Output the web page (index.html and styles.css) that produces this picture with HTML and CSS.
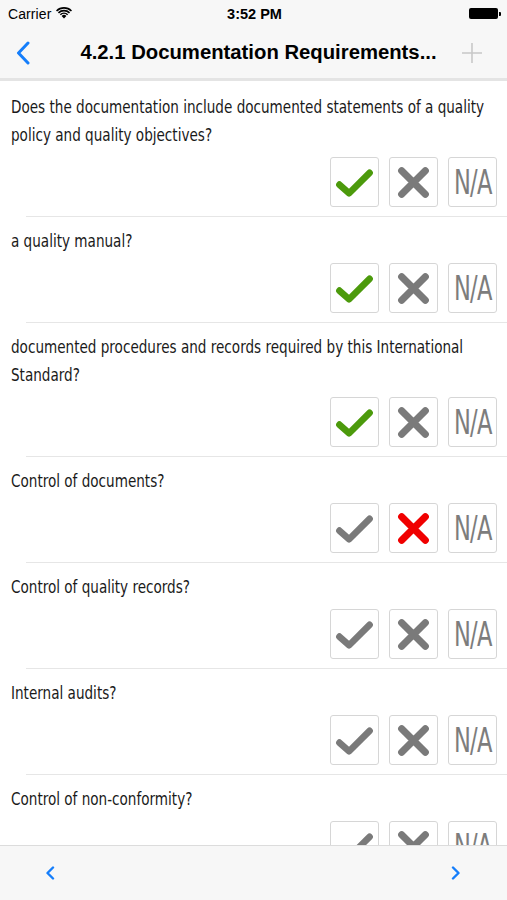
FILE: index.html
```html
<!DOCTYPE html>
<html>
<head>
<meta charset="utf-8">
<link rel="stylesheet" href="styles.css">
</head>
<body>
<div class="screen">
  <div class="statusbar">
    <div class="carrier">Carrier
      <svg class="wifi" width="16" height="12" viewBox="0 0 16 12"><path d="M8 11.5 L5.6 9 A3.4 3.4 0 0 1 10.4 9 Z" fill="#000"/><path d="M3.8 7.2 A6 6 0 0 1 12.2 7.2 L11.1 8.3 A4.5 4.5 0 0 0 4.9 8.3 Z" fill="#000"/><path d="M1.9 5.3 A8.7 8.7 0 0 1 14.1 5.3 L13 6.4 A7.2 7.2 0 0 0 3 6.4 Z" fill="#000"/><path d="M0 3.4 A11.3 11.3 0 0 1 16 3.4 L14.9 4.5 A9.8 9.8 0 0 0 1.1 4.5 Z" fill="#000"/></svg>
    </div>
    <div class="time">3:52 PM</div>
    <div class="battery"><span class="batt-body"></span><span class="batt-tip"></span></div>
  </div>
  <div class="navbar">
    <svg class="nav-back" width="14" height="24" viewBox="0 0 14 24"><path d="M12 2 L2.5 12 L12 22" fill="none" stroke="#157efb" stroke-width="3" stroke-linecap="round" stroke-linejoin="round"/></svg>
    <div class="nav-title">4.2.1 Documentation Requirements...</div>
    <svg class="nav-plus" width="22" height="22" viewBox="0 0 22 22"><path d="M11 1 V21 M1 11 H21" stroke="#c8c8c8" stroke-width="1.6"/></svg>
  </div>
  <div class="list">
    <div class="row">
      <div class="q"><span class="qt">Does the documentation include documented statements of a quality policy and quality objectives?</span></div>
      <div class="btns">
        <div class="btn"><svg class="ico" viewBox="0 0 40 40"><path d="M6 22 L15 30 L34 11" class="chk green"/></svg></div>
        <div class="btn"><svg class="ico" viewBox="0 0 40 40"><path d="M9 9 L31 31 M31 9 L9 31" class="crs gray"/></svg></div>
        <div class="btn"><span class="na">N/A</span></div>
      </div>
    </div>
    <div class="row">
      <div class="q"><span class="qt">a quality manual?</span></div>
      <div class="btns">
        <div class="btn"><svg class="ico" viewBox="0 0 40 40"><path d="M6 22 L15 30 L34 11" class="chk green"/></svg></div>
        <div class="btn"><svg class="ico" viewBox="0 0 40 40"><path d="M9 9 L31 31 M31 9 L9 31" class="crs gray"/></svg></div>
        <div class="btn"><span class="na">N/A</span></div>
      </div>
    </div>
    <div class="row">
      <div class="q"><span class="qt">documented procedures and records required by this International Standard?</span></div>
      <div class="btns">
        <div class="btn"><svg class="ico" viewBox="0 0 40 40"><path d="M6 22 L15 30 L34 11" class="chk green"/></svg></div>
        <div class="btn"><svg class="ico" viewBox="0 0 40 40"><path d="M9 9 L31 31 M31 9 L9 31" class="crs gray"/></svg></div>
        <div class="btn"><span class="na">N/A</span></div>
      </div>
    </div>
    <div class="row">
      <div class="q"><span class="qt">Control of documents?</span></div>
      <div class="btns">
        <div class="btn"><svg class="ico" viewBox="0 0 40 40"><path d="M6 22 L15 30 L34 11" class="chk gray"/></svg></div>
        <div class="btn"><svg class="ico" viewBox="0 0 40 40"><path d="M9 9 L31 31 M31 9 L9 31" class="crs red"/></svg></div>
        <div class="btn"><span class="na">N/A</span></div>
      </div>
    </div>
    <div class="row">
      <div class="q"><span class="qt">Control of quality records?</span></div>
      <div class="btns">
        <div class="btn"><svg class="ico" viewBox="0 0 40 40"><path d="M6 22 L15 30 L34 11" class="chk gray"/></svg></div>
        <div class="btn"><svg class="ico" viewBox="0 0 40 40"><path d="M9 9 L31 31 M31 9 L9 31" class="crs gray"/></svg></div>
        <div class="btn"><span class="na">N/A</span></div>
      </div>
    </div>
    <div class="row">
      <div class="q"><span class="qt">Internal audits?</span></div>
      <div class="btns">
        <div class="btn"><svg class="ico" viewBox="0 0 40 40"><path d="M6 22 L15 30 L34 11" class="chk gray"/></svg></div>
        <div class="btn"><svg class="ico" viewBox="0 0 40 40"><path d="M9 9 L31 31 M31 9 L9 31" class="crs gray"/></svg></div>
        <div class="btn"><span class="na">N/A</span></div>
      </div>
    </div>
    <div class="row">
      <div class="q"><span class="qt">Control of non-conformity?</span></div>
      <div class="btns">
        <div class="btn"><svg class="ico" viewBox="0 0 40 40"><path d="M6 22 L15 30 L34 11" class="chk gray"/></svg></div>
        <div class="btn"><svg class="ico" viewBox="0 0 40 40"><path d="M9 9 L31 31 M31 9 L9 31" class="crs gray"/></svg></div>
        <div class="btn"><span class="na">N/A</span></div>
      </div>
    </div>
  </div>
  <div class="toolbar">
    <svg class="tb-ico" width="10" height="14" viewBox="0 0 10 14"><path d="M8 1.5 L2.5 7 L8 12.5" fill="none" stroke="#157efb" stroke-width="2.4" stroke-linecap="round" stroke-linejoin="round"/></svg>
    <svg class="tb-ico" width="10" height="14" viewBox="0 0 10 14"><path d="M2 1.5 L7.5 7 L2 12.5" fill="none" stroke="#157efb" stroke-width="2.4" stroke-linecap="round" stroke-linejoin="round"/></svg>
  </div>
</div>
</body>
</html>
```

FILE: styles.css
```css
* { box-sizing: border-box; }
html, body { margin: 0; padding: 0; }
body { background: #fff; font-family: "Liberation Sans", Arial, sans-serif; }
.screen { width: 507px; height: 900px; position: relative; overflow: hidden; display: flex; flex-direction: column; }

.statusbar { height: 27px; background: #f7f7f7; display: flex; align-items: center; justify-content: space-between; padding: 0 6px 0 8px; font-size: 14px; color: #000; flex: none; }
.carrier { display: flex; align-items: center; gap: 5px; width: 120px; letter-spacing: 0.1px; }
.wifi { margin-top: -2px; }
.time { font-weight: bold; font-size: 14.5px; }
.battery { width: 120px; display: flex; justify-content: flex-end; align-items: center; }
.batt-body { width: 29px; height: 11px; background: #000; border-radius: 2px; }
.batt-tip { width: 2px; height: 4px; background: #000; margin-left: 1px; border-radius: 0 1px 1px 0; }

.navbar { height: 54px; background: #f7f7f7; display: flex; align-items: center; padding: 0 24px 0 16px; border-bottom: 3px solid #e4e4e4; flex: none; }
.nav-back { flex: none; margin-top: 1px; }
.nav-title { flex: 1; text-align: center; font-weight: bold; font-size: 20.3px; color: #000; padding-left: 26px; white-space: nowrap; }
.nav-plus { flex: none; }

.list { flex: 1; overflow: hidden; padding-top: 2px; }
.row { padding: 10px 10px 10px 11px; position: relative; }
.row::after { content: ""; position: absolute; left: 26px; right: 0; bottom: 0; height: 1px; background: #e6e6e6; }
.qt { display: block; width: 580px; transform: scaleX(0.838); transform-origin: 0 0; font-family: "DejaVu Sans Condensed", "DejaVu Sans", sans-serif; font-size: 18px; line-height: 28px; color: #1a1a1a; }
.btns { display: flex; justify-content: flex-end; gap: 10px; margin-top: 8px; }
.btn { width: 49px; height: 50px; border: 1px solid #d6d6d6; border-radius: 3px; background: #fff; display: flex; align-items: center; justify-content: center; }
.ico { width: 43px; height: 43px; }
.chk, .crs { fill: none; stroke-linecap: round; stroke-linejoin: round; }
.chk { stroke-width: 6.2; }
.crs { stroke-width: 6.6; }
.green { stroke: #4c9a0c; }
.gray { stroke: #7a7a7a; }
.red { stroke: #f00000; }
.na { font-family: "DejaVu Sans Condensed", "DejaVu Sans", sans-serif; font-size: 33px; color: #7d7d7d; letter-spacing: -1px; transform: scaleX(0.76); display: inline-block; line-height: 1; }

.toolbar { height: 55px; flex: none; background: #f7f7f7; border-top: 1px solid #dcdcdc; display: flex; align-items: center; justify-content: space-between; padding: 0 46px 0 45px; }
```
